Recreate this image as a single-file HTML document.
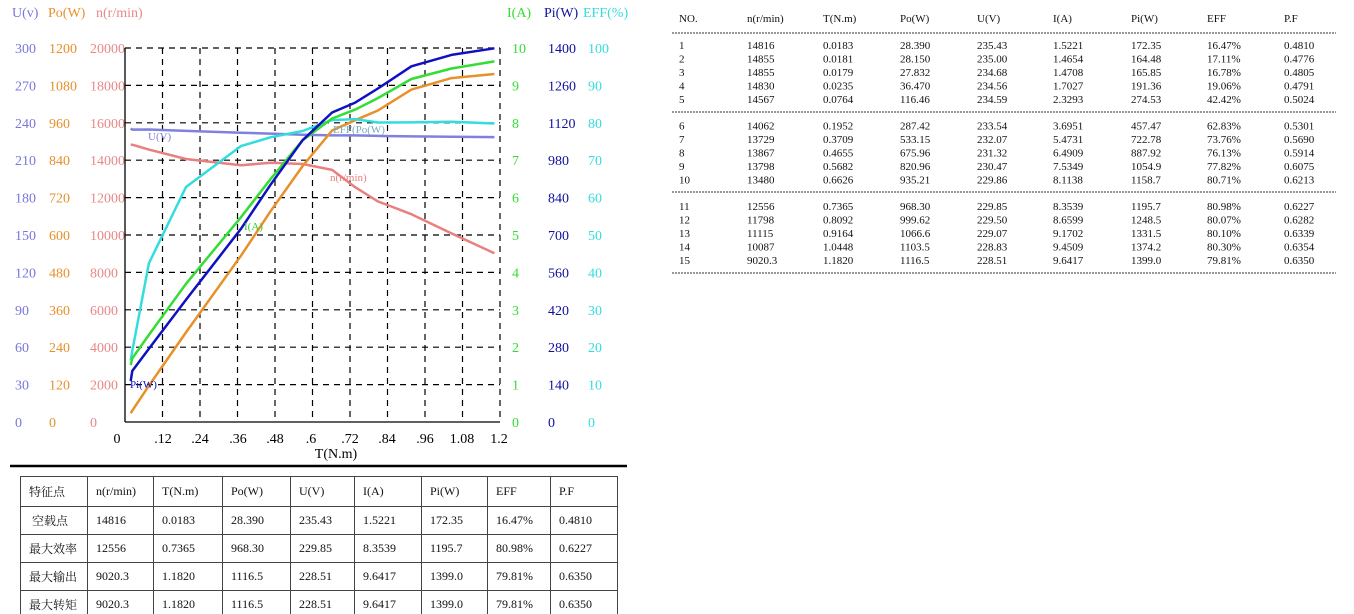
<!DOCTYPE html>
<html><head><meta charset="utf-8"><style>
html,body{margin:0;width:1354px;height:614px;background:#fff;overflow:hidden;position:relative;font-family:"Liberation Serif","Noto Serif CJK SC",serif}
svg{position:absolute;left:0;top:0}
table.b{position:absolute;left:20px;top:476px;border-collapse:collapse;font-size:12px;color:#111}
table.b td{border:1px solid #444;height:28px;padding:0 0 0 8px;box-sizing:border-box}
table.b tr:first-child td{height:30px}
</style></head><body>
<svg width="1354" height="614" font-family="Liberation Serif, serif">
<g font-size="14">
<text x="12" y="17" fill="#7777dd">U(v)</text>
<text x="48" y="17" fill="#e8902a">Po(W)</text>
<text x="96" y="17" fill="#e88888">n(r/min)</text>
<text x="507" y="17" fill="#33dd33">I(A)</text>
<text x="544" y="17" fill="#1010a0">Pi(W)</text>
<text x="583" y="17" fill="#33dddd">EFF(%)</text>
</g>
<g font-size="14" id="lab"></g>
<g stroke="#000" stroke-width="1.2" stroke-dasharray="6,5" id="grid"></g>
<line x1="125" y1="48" x2="125" y2="422" stroke="#000" stroke-width="1.3"/>
<line x1="125" y1="422" x2="500" y2="422" stroke="#000" stroke-width="1.3"/>
<g fill="none" stroke-width="2.5" stroke-linejoin="round">
<polyline stroke="#e88080" points="130.7,144.9 132.3,144.7 148.9,149.6 186,159 240.9,165.3 270.5,162.7 302.6,164 332.1,169.9 355.2,187.2 377.9,201.4 411.4,214.2 451.5,233.4 494.4,253.3"/>
<polyline stroke="#8080e0" points="130.7,128.5 132.3,129.6 148.9,129.5 186,130.9 240.9,132.7 270.5,133.6 302.6,134.7 332.1,135.4 355.2,135.4 377.9,135.9 411.4,136.4 451.5,136.7 494.4,137.1"/>
<polyline stroke="#e8902a" points="130.7,413.2 132.3,410.6 148.9,385.7 186,332.4 240.9,255.8 270.5,211.3 302.6,166.1 332.1,130.5 355.2,120.2 377.9,110.5 411.4,89.6 451.5,78.1 494.4,74"/>
<polyline stroke="#33dddd" points="130.7,360.4 132.3,350.7 148.9,263.3 186,187 240.9,146.1 270.5,137.3 302.6,131 332.1,120.1 355.2,119.1 377.9,122.5 411.4,122.4 451.5,121.7 494.4,123.5"/>
<polyline stroke="#33dd33" points="130.7,365.1 132.3,358.3 148.9,334.9 186,283.8 240.9,217.3 270.5,179.2 302.6,140.2 332.1,118.5 355.2,109.6 377.9,98.1 411.4,79 451.5,68.5 494.4,61.4"/>
<polyline stroke="#1010c0" points="130.7,381 132.3,370.9 148.9,348.7 186,299.8 240.9,228.9 270.5,184.8 302.6,140.2 332.1,112.5 355.2,102.6 377.9,88.5 411.4,66.3 451.5,54.9 494.4,48.3"/>
</g>
<g font-size="11">
<text x="148" y="140" fill="#8080e0">U(V)</text>
<text x="330" y="181" fill="#e88080">n(r/min)</text>
<text x="333" y="133" fill="#7ab">EFF(Po(W)</text>
<text x="244" y="230" fill="#33cc33">I(A)</text>
<text x="130" y="388" fill="#1010c0">Pi(W)</text>
</g>
<g font-size="14" text-anchor="middle" fill="#000">
<text x="117" y="443">0</text><text x="163" y="443">.12</text><text x="200" y="443">.24</text><text x="238" y="443">.36</text><text x="275" y="443">.48</text><text x="311" y="443">.6</text><text x="350" y="443">.72</text><text x="387" y="443">.84</text><text x="425" y="443">.96</text><text x="462" y="443">1.08</text><text x="499" y="443">1.2</text>
<text x="336" y="458">T(N.m)</text>
</g>
<line x1="10" y1="466" x2="627" y2="466" stroke="#000" stroke-width="2.5"/>
<g font-size="11" fill="#111" id="rt"></g>
<g stroke="#333" stroke-width="1" stroke-dasharray="2,1">
<line x1="672" y1="33" x2="1336" y2="33"/><line x1="672" y1="112" x2="1336" y2="112"/><line x1="672" y1="192" x2="1336" y2="192"/><line x1="672" y1="273" x2="1336" y2="273"/>
</g>
</svg>
<table class="b">
<tr><td style="width:67px">特征点</td><td style="width:66px">n(r/min)</td><td style="width:69px">T(N.m)</td><td style="width:68px">Po(W)</td><td style="width:64px">U(V)</td><td style="width:67px">I(A)</td><td style="width:66px">Pi(W)</td><td style="width:63px">EFF</td><td style="width:67px">P.F</td></tr>
<tr><td>&nbsp;空载点</td><td>14816</td><td>0.0183</td><td>28.390</td><td>235.43</td><td>1.5221</td><td>172.35</td><td>16.47%</td><td>0.4810</td></tr>
<tr><td>最大效率</td><td>12556</td><td>0.7365</td><td>968.30</td><td>229.85</td><td>8.3539</td><td>1195.7</td><td>80.98%</td><td>0.6227</td></tr>
<tr><td>最大输出</td><td>9020.3</td><td>1.1820</td><td>1116.5</td><td>228.51</td><td>9.6417</td><td>1399.0</td><td>79.81%</td><td>0.6350</td></tr>
<tr><td>最大转矩</td><td>9020.3</td><td>1.1820</td><td>1116.5</td><td>228.51</td><td>9.6417</td><td>1399.0</td><td>79.81%</td><td>0.6350</td></tr>
</table>
<script>
var ns="http://www.w3.org/2000/svg";
function T(g,x,y,s,c,a){var t=document.createElementNS(ns,"text");t.setAttribute("x",x);t.setAttribute("y",y);if(c)t.setAttribute("fill",c);if(a)t.setAttribute("text-anchor",a);t.textContent=s;g.appendChild(t);}
var lab=document.getElementById("lab");
for(var k=0;k<=10;k++){var y=422-37.4*k+5;
T(lab,15,y,String(30*k),"#7777dd");
T(lab,49,y,String(120*k),"#e8902a");
T(lab,90,y,String(2000*k),"#e88888");
T(lab,512,y,String(k),"#33dd33");
T(lab,548,y,String(140*k),"#1010a0");
T(lab,588,y,String(10*k),"#33dddd");}
var g=document.getElementById("grid");
function L(x1,y1,x2,y2){var l=document.createElementNS(ns,"line");l.setAttribute("x1",x1);l.setAttribute("y1",y1);l.setAttribute("x2",x2);l.setAttribute("y2",y2);g.appendChild(l);}
for(var k=1;k<=10;k++){var x=125+37.5*k;L(x,48,x,422);}
for(var k=0;k<10;k++){var y=48+37.4*k;L(125,y,500,y);}
var rt=document.getElementById("rt");
var cx=[679,747,823,900,977,1053,1131,1207,1284];
var hd=["NO.","n(r/min)","T(N.m)","Po(W)","U(V)","I(A)","Pi(W)","EFF","P.F"];
hd.forEach(function(s,i){T(rt,cx[i],22,s);});
var d=[["1","14816","0.0183","28.390","235.43","1.5221","172.35","16.47%","0.4810"],
["2","14855","0.0181","28.150","235.00","1.4654","164.48","17.11%","0.4776"],
["3","14855","0.0179","27.832","234.68","1.4708","165.85","16.78%","0.4805"],
["4","14830","0.0235","36.470","234.56","1.7027","191.36","19.06%","0.4791"],
["5","14567","0.0764","116.46","234.59","2.3293","274.53","42.42%","0.5024"],
["6","14062","0.1952","287.42","233.54","3.6951","457.47","62.83%","0.5301"],
["7","13729","0.3709","533.15","232.07","5.4731","722.78","73.76%","0.5690"],
["8","13867","0.4655","675.96","231.32","6.4909","887.92","76.13%","0.5914"],
["9","13798","0.5682","820.96","230.47","7.5349","1054.9","77.82%","0.6075"],
["10","13480","0.6626","935.21","229.86","8.1138","1158.7","80.71%","0.6213"],
["11","12556","0.7365","968.30","229.85","8.3539","1195.7","80.98%","0.6227"],
["12","11798","0.8092","999.62","229.50","8.6599","1248.5","80.07%","0.6282"],
["13","11115","0.9164","1066.6","229.07","9.1702","1331.5","80.10%","0.6339"],
["14","10087","1.0448","1103.5","228.83","9.4509","1374.2","80.30%","0.6354"],
["15","9020.3","1.1820","1116.5","228.51","9.6417","1399.0","79.81%","0.6350"]];
d.forEach(function(r,i){var grp=Math.floor(i/5),j=i%5;var y=49+grp*80.5+j*13.5;r.forEach(function(s,c){T(rt,cx[c],y,s);});});
</script>
</body></html>
